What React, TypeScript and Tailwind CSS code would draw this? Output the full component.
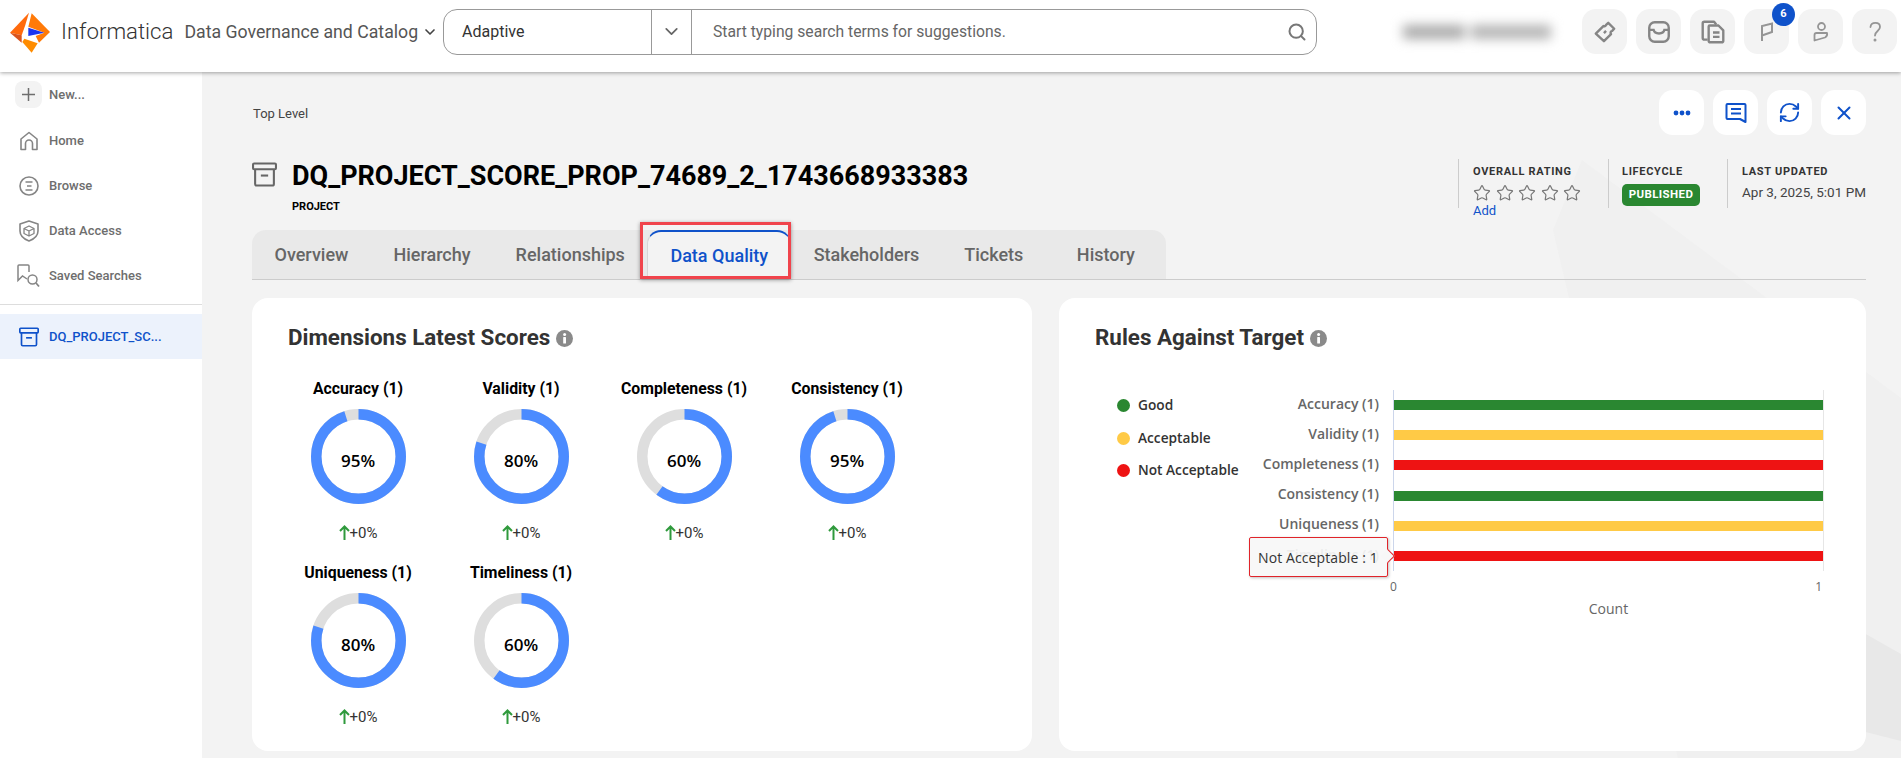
import React from "react";
import { ChevronDown, Search, RefreshCw, X, Star } from "lucide-react";

const scores = [
  { name: "Accuracy (1)", pct: 95 },
  { name: "Validity (1)", pct: 80 },
  { name: "Completeness (1)", pct: 60 },
  { name: "Consistency (1)", pct: 95 },
  { name: "Uniqueness (1)", pct: 80 },
  { name: "Timeliness (1)", pct: 60 },
];

const rules = [
  { name: "Accuracy (1)", color: "bg-[#2a8731]" },
  { name: "Validity (1)", color: "bg-[#ffca46]" },
  { name: "Completeness (1)", color: "bg-[#ee1313]" },
  { name: "Consistency (1)", color: "bg-[#2a8731]" },
  { name: "Uniqueness (1)", color: "bg-[#ffca46]" },
  { name: "Timeliness (1)", color: "bg-[#ee1313]" },
];

const tabs = ["Overview", "Hierarchy", "Relationships", "Data Quality", "Stakeholders", "Tickets", "History"];

function Logo() {
  return (
    <svg width="52" height="52" viewBox="0 0 156 156" className="shrink-0">
      <polygon points="72,20 15,80 50,88 60,60" fill="#ff6a0d" />
      <polygon points="15,80 50,110 50,88" fill="#d9541e" />
      <polygon points="80,22 135,78 102,110 92,90 118,80 70,62" fill="#ff7a08" />
      <polygon points="52,108 58,98 98,112 80,140" fill="#ff8c00" />
      <polygon points="70,65 118,80 70,90" fill="#1a35f0" />
    </svg>
  );
}

function TicketIcon() {
  return (
    <svg width="26" height="26" viewBox="0 0 24 24" fill="none" stroke="#858585" strokeWidth="2.2" strokeLinejoin="round">
      <path d="M15 3.5 L20.5 9 L18.6 11 A1.8 1.8 0 0 0 17.6 14 L11 20.5 L3.5 13.5 L10.5 6.5 A1.8 1.8 0 0 0 13 5.5 Z" />
      <path d="M11 13 L13 11" />
    </svg>
  );
}

function InboxIcon() {
  return (
    <svg width="26" height="26" viewBox="0 0 24 24" fill="none" stroke="#858585" strokeWidth="2.2">
      <rect x="3" y="3" width="18" height="18" rx="5" />
      <path d="M3 10 H7 C8 14.5 16 14.5 17 10 H21" />
    </svg>
  );
}

function CopyIcon() {
  return (
    <svg width="26" height="26" viewBox="0 0 24 24" fill="none" stroke="#858585" strokeWidth="2.2" strokeLinejoin="round">
      <path d="M7 19 H4 A1.5 1.5 0 0 1 2.5 17.5 V4 A1.5 1.5 0 0 1 4 2.5 H13 L15 5" />
      <path d="M8 7 A1 1 0 0 1 9 6 H17 L21.5 10.5 V20 A1.5 1.5 0 0 1 20 21.5 H9.5 A1.5 1.5 0 0 1 8 20 Z" />
      <path d="M12 12.5 H18 M12 16.5 H18" />
    </svg>
  );
}

function FlagIcon() {
  return (
    <svg width="24" height="24" viewBox="0 0 24 24" fill="none" stroke="#959595" strokeWidth="2">
      <path d="M7 21 V6 L17 3.5 V12 L7 15.5" />
    </svg>
  );
}

function UserIcon() {
  return (
    <svg width="24" height="24" viewBox="0 0 24 24" fill="none" stroke="#959595" strokeWidth="1.8" strokeLinejoin="round">
      <circle cx="12.5" cy="6.5" r="3.5" />
      <path d="M5.5 15 A2 2 0 0 1 7.5 13 H18 C18.5 15 18 16.5 16 17.5 L5.5 20.5 Z" />
    </svg>
  );
}

function QuestionIcon() {
  return (
    <svg width="24" height="24" viewBox="0 0 24 24" fill="none" stroke="#959595" strokeWidth="1.8" strokeLinecap="round">
      <path d="M7.5 7 C8 1.5 17 1.5 17 7 C17 11 12 11 12 15.5" />
      <circle cx="12" cy="20" r="0.6" fill="#959595" />
    </svg>
  );
}

function HomeIcon() {
  return (
    <svg width="20" height="20" viewBox="0 0 20 20" fill="none" stroke="#858585" strokeWidth="1.6" strokeLinejoin="round">
      <path d="M2 18.5 V8 L10 1.5 L18 8 V18.5 H13.5 V12.5 A3.5 3.5 0 0 0 6.5 12.5 V18.5 Z" />
    </svg>
  );
}

function BrowseIcon() {
  return (
    <svg width="20" height="20" viewBox="0 0 20 20" fill="none" stroke="#858585" strokeWidth="1.6">
      <circle cx="10" cy="10" r="9" />
      <path d="M6.5 6 H13.5 M8 10 H12.5 M6.5 14 H13.5" />
    </svg>
  );
}

function ShieldIcon() {
  return (
    <svg width="20" height="22" viewBox="0 0 20 22" fill="none" stroke="#858585" strokeWidth="1.6" strokeLinejoin="round">
      <path d="M10 1 L19 4 V11 C19 16 14 19.5 10 21 C6 19.5 1 16 1 11 V4 Z" />
      <path d="M10 6 L15 8.5 V13.5 L10 16 L5 13.5 V8.5 Z M5 8.5 L10 11 L15 8.5 M10 11 V16" strokeWidth="1.3" />
    </svg>
  );
}

function SavedIcon() {
  return (
    <svg width="23" height="24" viewBox="0 0 23 24" fill="none" stroke="#858585" strokeWidth="1.5">
      <path d="M10 15 L5.5 12 L1 16.5 V2 A1 1 0 0 1 2 1 H11 A1 1 0 0 1 12 2 V8" />
      <circle cx="15.5" cy="15.5" r="4.5" />
      <path d="M19 19 L22 22.5" strokeWidth="1.8" />
    </svg>
  );
}

function ArchiveIcon({ color, size }: { color: string; size: number }) {
  return (
    <svg width={size} height={size} viewBox="0 0 24 24" fill="none" stroke={color} strokeWidth="2" strokeLinejoin="round">
      <rect x="1" y="1.5" width="22" height="5.5" rx="1" />
      <path d="M3 7 V21 A1.5 1.5 0 0 0 4.5 22.5 H19.5 A1.5 1.5 0 0 0 21 21 V7" />
      <path d="M8.5 13 H15.5" />
    </svg>
  );
}

function CommentIcon() {
  return (
    <svg width="24" height="24" viewBox="0 0 24 24" fill="none" stroke="#0f52ca" strokeWidth="2" strokeLinejoin="round">
      <path d="M3.5 3 H20.5 A1 1 0 0 1 21.5 4 V21 L16 18 H3.5 A1 1 0 0 1 2.5 17 V4 A1 1 0 0 1 3.5 3 Z" />
      <path d="M7 8 H17 M7 12.5 H17" />
    </svg>
  );
}

function InfoDot() {
  return (
    <svg width="17" height="17" viewBox="0 0 17 17" className="shrink-0">
      <circle cx="8.5" cy="8.5" r="8.5" fill="#8a8a8a" />
      <rect x="7.2" y="7" width="2.8" height="6.5" rx="0.6" fill="#fff" />
      <circle cx="8.6" cy="4.6" r="1.5" fill="#fff" />
    </svg>
  );
}

function UpArrow() {
  return (
    <svg width="11" height="15" viewBox="0 0 11 15" fill="none" stroke="#2f9a3c" strokeWidth="2" className="shrink-0">
      <path d="M5.5 15 V1.5 M1 6 L5.5 1.5 L10 6" />
    </svg>
  );
}

function Donut({ name, pct }: { name: string; pct: number }) {
  const r = 42.25;
  const c = 2 * Math.PI * r;
  return (
    <div className="flex flex-col items-center">
      <div className="h-5 text-[15.8px] leading-5 font-bold text-black">{name}</div>
      <div className="relative mt-[10px] h-[95px] w-[95px]">
        <svg width="95" height="95" viewBox="0 0 95 95" className="-rotate-90">
          <circle cx="47.5" cy="47.5" r={r} fill="none" stroke="#dedede" strokeWidth="10.5" />
          <circle cx="47.5" cy="47.5" r={r} fill="none" stroke="#4b8bff" strokeWidth="10.5" strokeDasharray={`${(c * pct) / 100} ${c}`} />
        </svg>
        <div className="absolute inset-0 flex items-center justify-center pt-[8px] font-['Open_Sans',sans-serif] text-[17px] font-semibold text-black">
          {pct}%
        </div>
      </div>
      <div className="mt-[18px] flex h-5 items-center text-[15px] text-[#333]">
        <UpArrow />
        <span className="mt-[2px]">+0%</span>
      </div>
    </div>
  );
}

export default function App() {
  return (
    <div className="relative flex h-[758px] w-[1901px] flex-col overflow-hidden bg-white font-['Roboto',sans-serif]">
      <header className="relative z-20 flex h-[72px] shrink-0 items-center bg-white pb-[9px] shadow-[0_1px_4px_rgba(0,0,0,0.35)]">
        <div className="flex w-[443px] shrink-0 items-center pl-[5px]">
          <Logo />
          <span className="ml-[4px] pt-[1px] text-[22.2px] font-light text-[#333]">Informatica</span>
          <span className="ml-[11px] pt-[1px] text-[17.7px] whitespace-nowrap text-[#555]">Data Governance and Catalog</span>
          <ChevronDown size={16} strokeWidth={2.5} className="ml-[4px] shrink-0 text-[#444]" />
        </div>
        <div className="flex h-[46px] w-[874px] items-stretch rounded-[14px] border border-[#999] bg-white">
          <div className="flex w-[207px] items-center pl-[18px] pt-[1px] text-[16px] text-[#333]">Adaptive</div>
          <div className="flex w-[41px] items-center justify-center border-x border-[#999]">
            <ChevronDown size={21} strokeWidth={2} className="text-[#666]" />
          </div>
          <div className="flex flex-1 items-center pl-[21px] pr-[9px] text-[15.7px] text-[#666]">
            <span className="flex-1 pt-[1px]">Start typing search terms for suggestions.</span>
            <Search size={20} strokeWidth={2.4} className="text-[#777]" />
          </div>
        </div>
        <div className="ml-[86px] flex w-[179px] items-center gap-[6px] blur-[6px]">
          <div className="h-[14px] w-[62px] bg-[#aaa]" />
          <div className="h-[14px] w-[80px] bg-[#b4b4b4]" />
        </div>
        <div className="flex gap-[9px]">
          <div className="flex h-[45px] w-[45px] items-center justify-center rounded-[14px] bg-[#f3f3f3]"><TicketIcon /></div>
          <div className="flex h-[45px] w-[45px] items-center justify-center rounded-[14px] bg-[#f3f3f3]"><InboxIcon /></div>
          <div className="flex h-[45px] w-[45px] items-center justify-center rounded-[14px] bg-[#f3f3f3]"><CopyIcon /></div>
          <div className="relative flex h-[45px] w-[45px] items-center justify-center rounded-[14px] bg-[#f3f3f3]">
            <FlagIcon />
            <span className="absolute -top-[6px] left-[28px] flex h-[23px] w-[23px] items-center justify-center rounded-full bg-[#0f52ca] text-[11px] font-bold text-white">6</span>
          </div>
          <div className="flex h-[45px] w-[45px] items-center justify-center rounded-[14px] bg-[#f3f3f3]"><UserIcon /></div>
          <div className="flex h-[45px] w-[45px] items-center justify-center rounded-[14px] bg-[#f3f3f3]"><QuestionIcon /></div>
        </div>
      </header>

      <div className="flex min-h-0 flex-1">
        <aside className="relative z-10 w-[202px] shrink-0 bg-white pt-[9px] text-[13px] font-medium text-[#6e6e6e]">
          <div className="flex h-[27px] items-center pl-[15px]">
            <span className="flex h-[27px] w-[27px] items-center justify-center rounded-[8px] bg-[#f3f3f3]">
              <svg width="15" height="15" viewBox="0 0 15 15" stroke="#6e6e6e" strokeWidth="1.5"><path d="M7.5 1 V14 M1 7.5 H14" /></svg>
            </span>
            <span className="ml-[7px] pt-[1px]">New...</span>
          </div>
          <div className="mt-[10px] flex h-[45px] items-center"><span className="flex w-[49px] justify-center pl-[9px] pr-[1px]"><HomeIcon /></span>Home</div>
          <div className="flex h-[45px] items-center"><span className="flex w-[49px] justify-center pl-[9px] pr-[1px]"><BrowseIcon /></span>Browse</div>
          <div className="flex h-[45px] items-center"><span className="flex w-[49px] justify-center pl-[9px] pr-[1px]"><ShieldIcon /></span>Data Access</div>
          <div className="flex h-[45px] items-center"><span className="flex w-[49px] justify-center pl-[9px] pr-[1px]"><SavedIcon /></span>Saved Searches</div>
          <div className="mt-[6px] border-t border-[#ddd]" />
          <div className="mt-[9px] flex h-[45px] items-center bg-[#ecf2fc] text-[#0f52ca]">
            <span className="flex w-[49px] justify-center pl-[9px] pr-[1px]"><ArchiveIcon color="#0f52ca" size={20} /></span>
            DQ_PROJECT_SC...
          </div>
        </aside>

        <main className="relative min-w-0 flex-1 bg-[#f3f3f3] pl-[50px] pr-[35px] pt-[18px]">
          <svg className="absolute inset-0 h-full w-full" viewBox="202 72 1699 686" preserveAspectRatio="none">
            <polygon points="1582,160 1901,398 1901,758 1678,758 1553,230" fill="#f0f0f0" />
            <polygon points="1700,540 1901,654 1901,741 1700,690" fill="#e8e8e8" />
          </svg>

          <div className="relative">
            <div className="flex h-[45px] items-center justify-between">
              <span className="pl-[1px] pt-[2px] text-[13px] text-[#444]">Top Level</span>
              <div className="flex gap-[9px]">
                <div className="flex h-[45px] w-[45px] items-center justify-center rounded-[14px] bg-white">
                  <svg width="18" height="6" viewBox="0 0 18 6" fill="#0f52ca"><circle cx="3" cy="3" r="2.4" /><circle cx="9" cy="3" r="2.4" /><circle cx="15" cy="3" r="2.4" /></svg>
                </div>
                <div className="flex h-[45px] w-[45px] items-center justify-center rounded-[14px] bg-white"><CommentIcon /></div>
                <div className="flex h-[45px] w-[45px] items-center justify-center rounded-[14px] bg-white"><RefreshCw size={23} strokeWidth={2} className="text-[#0f52ca]" /></div>
                <div className="flex h-[45px] w-[45px] items-center justify-center rounded-[14px] bg-white"><X size={22} strokeWidth={2.2} className="text-[#0f52ca]" /></div>
              </div>
            </div>

            <div className="mt-[24px] flex h-[71px] items-start justify-between">
              <div className="flex">
                <div className="mt-[3px]"><ArchiveIcon color="#666" size={25} /></div>
                <div className="ml-[15px]">
                  <div className="text-[27px] leading-[34px] font-bold text-black">DQ_PROJECT_SCORE_PROP_74689_2_1743668933383</div>
                  <div className="mt-[7px] text-[11px] leading-[13px] font-bold text-black">PROJECT</div>
                </div>
              </div>
              <div className="flex h-[49px]">
                <div className="w-[150px] border-l border-[#ccc] pl-[14px]">
                  <div className="mt-[6px] text-[11px] leading-[14px] font-bold tracking-[0.7px] text-[#333]">OVERALL RATING</div>
                  <div className="mt-[5px] flex gap-[4.5px]">
                    {[1, 2, 3, 4, 5].map((i) => (
                      <Star key={i} size={18} strokeWidth={1.6} className="text-[#777]" />
                    ))}
                  </div>
                  <div className="mt-[1px] text-[13px] leading-[15px] text-[#0f52ca]">Add</div>
                </div>
                <div className="w-[119px] border-l border-[#ccc] pl-[13px]">
                  <div className="mt-[6px] text-[11px] leading-[14px] font-bold tracking-[0.7px] text-[#333]">LIFECYCLE</div>
                  <div className="mt-[5px] flex h-[22px] w-[78px] items-center justify-center rounded-[5px] bg-[#2a8731] text-[11.5px] font-bold tracking-[0.4px] text-white">PUBLISHED</div>
                </div>
                <div className="w-[139px] border-l border-[#ccc] pl-[14px]">
                  <div className="mt-[6px] text-[11px] leading-[14px] font-bold tracking-[0.7px] text-[#333]">LAST UPDATED</div>
                  <div className="mt-[3px] text-[13.5px] leading-[20px] whitespace-nowrap text-[#444]">Apr 3, 2025, 5:01 PM</div>
                </div>
              </div>
            </div>

            <div className="flex h-[50px] border-b border-[#ccc]">
              <div className="flex rounded-t-[14px] bg-[#e9e9e9] pr-[9px]">
                {tabs.map((t) =>
                  t === "Data Quality" ? (
                    <div key={t} className="relative flex items-center rounded-t-[14px] border-x border-t-2 border-[#d6d6d6] border-t-[#0f52ca] bg-[#f3f3f3] px-[22px] pb-[1px] text-[18px] font-medium text-[#0f52ca]">
                      {t}
                      <div className="absolute -top-[10px] -left-[8px] -right-[1px] bottom-0 border-[3px] border-[#f0444c] shadow-[0_1px_4px_rgba(0,0,0,0.4)]" />
                    </div>
                  ) : t === "History" ? (
                    <div key={t} className="flex items-center pb-[1px] pl-[31px] pr-[22.5px] text-[18px] font-medium text-[#666]">{t}</div>
                  ) : (
                    <div key={t} className="flex items-center px-[22.5px] pb-[1px] text-[18px] font-medium text-[#666]">{t}</div>
                  )
                )}
              </div>
            </div>

            <div className="mt-[18px] flex h-[453px] gap-[27px]">
              <section className="w-[780px] rounded-[16px] bg-white pt-[25px]">
                <div className="flex h-[30px] items-center gap-[6px] pl-[36px] text-[22.4px] font-bold text-[#333]">
                  Dimensions Latest Scores <InfoDot />
                </div>
                <div className="ml-[24.5px] mt-[26px] grid grid-cols-[repeat(4,163px)] gap-y-[21px]">
                  {scores.map((s) => (
                    <Donut key={s.name} name={s.name} pct={s.pct} />
                  ))}
                </div>
              </section>

              <section className="w-[807px] rounded-[16px] bg-white pt-[25px]">
                <div className="flex h-[30px] items-center gap-[6px] pl-[36px] text-[22.4px] font-bold text-[#333]">
                  Rules Against Target <InfoDot />
                </div>
                <div className="mt-[37px] flex font-['Open_Sans',sans-serif]">
                  <div className="w-[186px] pl-[58px] pt-[5px] text-[13.7px] font-semibold text-[#333]">
                    <div className="flex h-5 items-center gap-[8px]"><span className="h-[13px] w-[13px] rounded-full bg-[#2a8731]" />Good</div>
                    <div className="mt-[13px] flex h-5 items-center gap-[8px]"><span className="h-[13px] w-[13px] rounded-full bg-[#ffca46]" />Acceptable</div>
                    <div className="mt-[12px] flex h-5 items-center gap-[8px] whitespace-nowrap"><span className="h-[13px] w-[13px] rounded-full bg-[#ee1313]" />Not Acceptable</div>
                  </div>
                  <div className="-mt-[2px] mr-[14px] w-[134px] text-right text-[14px] font-semibold text-[#666]">
                    {rules.map((r) => (
                      <div key={r.name} className="flex h-[30.2px] items-center justify-end whitespace-nowrap">{r.name}</div>
                    ))}
                  </div>
                  <div className="relative w-[431px]">
                    <div className="border-l border-r border-l-[#ccd6eb] border-r-[#e6e6e6]">
                      {rules.map((r) => (
                        <div key={r.name} className="flex h-[30.2px] items-center">
                          <div className={`h-[10px] w-full ${r.color}`} />
                        </div>
                      ))}
                    </div>
                    <div className="mt-[6px] flex h-5 items-center justify-between pr-[2px] text-[12px] text-[#666]">
                      <span className="-ml-[3px]">0</span>
                      <span>1</span>
                    </div>
                    <div className="mt-[2px] text-center text-[14px] leading-5 text-[#666]">Count</div>

                    <div className="absolute -left-[144px] top-[147px] flex h-[40px] w-[139px] items-center rounded-[2px] border border-[#e0242a] bg-[rgba(247,247,247,0.92)] pl-[8px] text-[14px] tracking-[0.1px] text-[#333] shadow-[1px_1px_3px_rgba(0,0,0,0.25)]">
                      Not Acceptable : 1
                      <span className="absolute -right-[6px] top-[13px] h-[10px] w-[10px] rotate-45 border-r border-t border-[#e0242a] bg-[#f7f7f7]" />
                    </div>
                  </div>
                </div>
              </section>
            </div>
          </div>
        </main>
      </div>
    </div>
  );
}
